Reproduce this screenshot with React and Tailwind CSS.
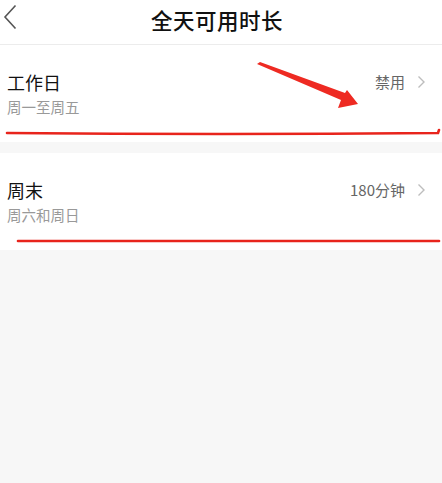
import React from 'react'

const Chevron = () => (
    <svg width="9" height="14" viewBox="0 0 9 14" fill="none" className="ml-[12px]">
        <path d="M1.5 1.5L7 7L1.5 12.5" stroke="#bdbdbd" strokeWidth="1.4" />
    </svg>
)

const Row = ({ title, sub, value }) => (
    <div className="flex justify-between bg-white h-[97px] pl-[7px] pr-[16px] pt-[25px]">
        <div className="flex flex-col">
            <div className="text-[18px] leading-[24px] text-[#111]">{title}</div>
            <div className="text-[14.5px] leading-[20px] text-[#999] mt-[3px]">{sub}</div>
        </div>
        <div className="flex items-center h-[24px] text-[15px] text-[#666]">
            {value}
            <Chevron />
        </div>
    </div>
)

const App = () => {
    return (
        <div className="relative w-[442px] h-[483px] bg-[#f7f7f7] overflow-hidden" style={{ fontFamily: '"Noto Sans CJK SC", "Noto Sans", sans-serif' }}>
            <div className="relative flex items-center justify-center h-[45px] bg-white border-b border-[#ececec]">
                <svg width="14" height="26" viewBox="0 0 14 26" fill="none" className="absolute left-[3px] top-[4px]">
                    <path d="M12.5 1.5L2 13L12.5 24.5" stroke="#555" strokeWidth="1.6" />
                </svg>
                <div className="text-[21.5px] font-medium text-[#111] tracking-[0.5px] -mt-[4px] -ml-[8px]">全天可用时长</div>
            </div>
            <Row title="工作日" sub="周一至周五" value="禁用" />
            <div className="h-[11px]" />
            <Row title="周末" sub="周六和周日" value="180分钟" />

            {/* red annotations */}
            <svg className="absolute left-0 top-0 pointer-events-none" width="442" height="483" viewBox="0 0 442 483">
                <path d="M7 133 Q220 135 438 133 L439 130" stroke="#e8241c" strokeWidth="2.6" fill="none" strokeLinecap="round" />
                <path d="M18 241 L439 241" stroke="#e8241c" strokeWidth="2.6" fill="none" strokeLinecap="round" />
                <polygon points="257,64 260,62 345,93 347,90 358,104 338,108 341,100" fill="#ee2a22" />
            </svg>
        </div>
    )
}

export default App
